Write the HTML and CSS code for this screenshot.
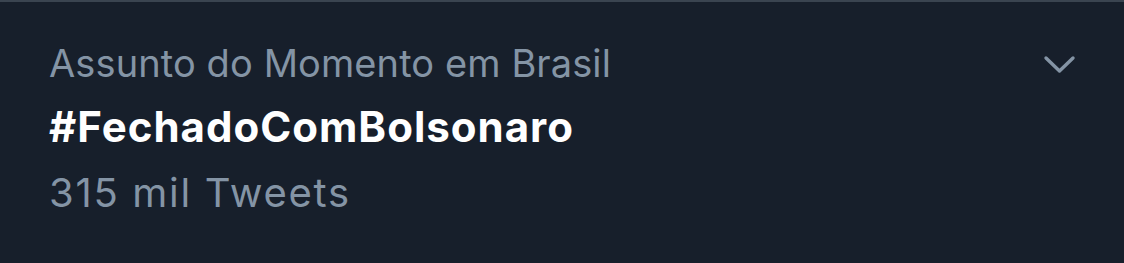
FILE: index.html
```html
<!DOCTYPE html>
<html>
<head>
    <title>Trend</title>
    <link rel="stylesheet" href="styles.css">
</head>
<body>
    <div class="trend">
        <div class="trend-text">
            <div class="context">Assunto do Momento em Brasil</div>
            <div class="name">#FechadoComBolsonaro</div>
            <div class="count">315 mil Tweets</div>
        </div>
        <svg class="caret" width="34" height="22" viewBox="0 0 34 22">
            <path d="M4 4 L17.5 17 L31 4" fill="none" stroke="#8494a5" stroke-width="3.4" stroke-linecap="round" stroke-linejoin="round"/>
        </svg>
    </div>
</body>
</html>
```

FILE: styles.css
```css
body { margin: 0; background: #171f2b; font-family: Inter, "Noto Sans", sans-serif; }
.trend {
    display: flex;
    justify-content: space-between;
    align-items: flex-start;
    height: 261px;
    border-top: 2px solid #3a4450;
    padding: 0 48px 0 49px;
}
.trend-text { padding-top: 41px; }
.context { color: #8494a5; font-size: 38px; line-height: 40px; letter-spacing: 0.1px; }
.name { color: #ffffff; font-size: 42px; font-weight: 700; line-height: 44px; margin-top: 22px; letter-spacing: 1px; }
.count { color: #8494a5; font-size: 40px; line-height: 44px; margin-top: 22px; letter-spacing: 1.7px; }
.caret { margin-top: 52px; }
```
